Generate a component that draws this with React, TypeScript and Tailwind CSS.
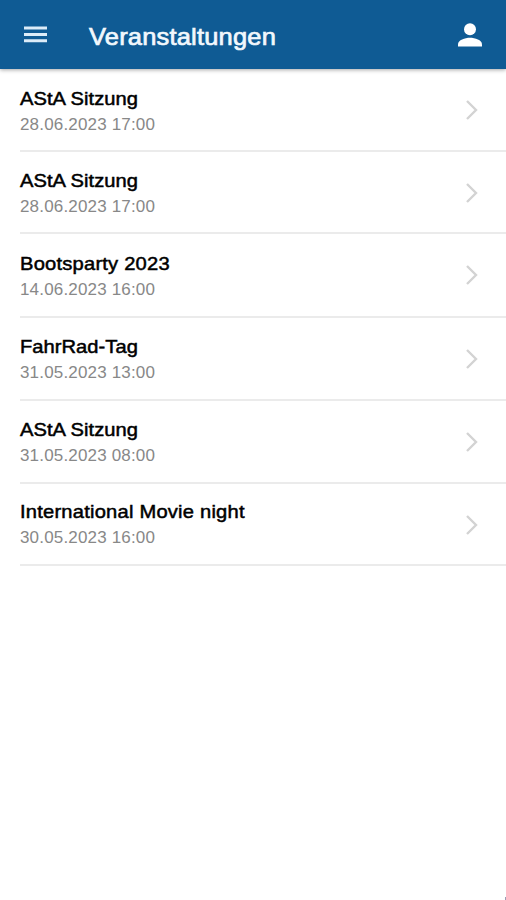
const events = [
  { title: "AStA Sitzung", date: "28.06.2023 17:00", tracking: "tracking-[0.03px]", height: "h-[83px]", pad: "pt-[18px]" },
  { title: "AStA Sitzung", date: "28.06.2023 17:00", tracking: "tracking-[0.03px]", height: "h-[82px]", pad: "pt-[17px]" },
  { title: "Bootsparty 2023", date: "14.06.2023 16:00", tracking: "tracking-[0.2px]", height: "h-[84px]", pad: "pt-[18px]" },
  { title: "FahrRad-Tag", date: "31.05.2023 13:00", tracking: "tracking-[0.03px]", height: "h-[83px]", pad: "pt-[17px]" },
  { title: "AStA Sitzung", date: "31.05.2023 08:00", tracking: "tracking-[0.03px]", height: "h-[83px]", pad: "pt-[17px]" },
  { title: "International Movie night", date: "30.05.2023 16:00", tracking: "tracking-[0.2px]", height: "h-[82px]", pad: "pt-[16px]" },
];

function MenuIcon() {
  return (
    <svg width="23" height="17" viewBox="0 0 23 17" fill="#dcecf8">
      <path d="M0 .5h23v3H0zM0 7h23v3H0zM0 13.2h23v3H0z" />
    </svg>
  );
}

function PersonIcon() {
  return (
    <svg width="24" height="24" viewBox="0 0 24 24" fill="#fff">
      <circle cx="12" cy="6.2" r="6" />
      <path d="M0 23.5v-2C0 17 7 14.8 12 14.8S24 17 24 21.5v2z" />
    </svg>
  );
}

function Chevron() {
  return (
    <svg width="13" height="22" viewBox="0 0 13 22" fill="none" stroke="#d3d3d3" strokeWidth="2.4">
      <path d="m2 2 9 9-9 9" />
    </svg>
  );
}

export default function App() {
  return (
    <div className="relative flex h-[900px] w-[506px] flex-col overflow-hidden bg-white font-['Liberation_Sans',Arial,sans-serif]">
      <header className="z-10 flex h-[69px] shrink-0 items-center bg-[#0f5b94] px-6 shadow-[0_1px_4px_rgba(0,0,0,0.35)]">
        <MenuIcon />
        <h1 className="mt-[4px] mr-auto ml-[42px] origin-left scale-x-[1.06] text-[24px] leading-8 tracking-[0.2px] whitespace-nowrap text-[#f2f8fd] [-webkit-text-stroke:0.7px_#f2f8fd]">
          Veranstaltungen
        </h1>
        <PersonIcon />
      </header>
      <main>
        {events.map((event, i) => (
          <div key={i} className={`ml-5 flex items-start justify-between border-b-2 border-[#ebebeb] pr-7 ${event.height}`}>
            <div className={`whitespace-nowrap ${event.pad}`}>
              <h2 className={`w-max origin-left scale-x-[1.06] text-[19px] leading-6 text-black [-webkit-text-stroke:0.5px_black] ${event.tracking}`}>{event.title}</h2>
              <p className="mt-0.5 text-[17px] leading-6 tracking-[0.17px] text-[#888]">{event.date}</p>
            </div>
            <div className="pt-[30px]">
              <Chevron />
            </div>
          </div>
        ))}
      </main>
      <span className="absolute right-0 bottom-0 h-[3px] w-px bg-[#9a9db5]" />
    </div>
  );
}
